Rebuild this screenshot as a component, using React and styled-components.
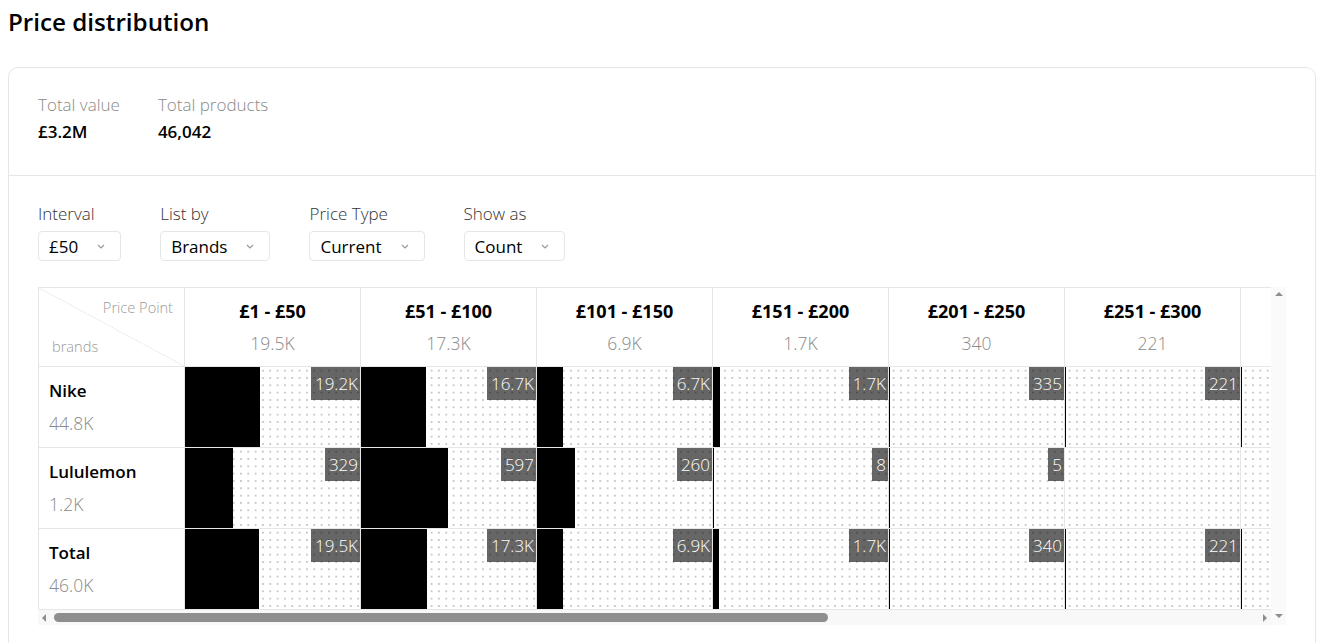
import React from 'react';
import styled, { createGlobalStyle } from 'styled-components';

const Global = createGlobalStyle`
  html, body { margin: 0; padding: 0; background: #fff; }
  body { font-family: "Open Sans", "Noto Sans", sans-serif; color: #000; }
  * { box-sizing: border-box; }
`;

const Page = styled.div`
  padding: 8px 3px 0 8px;
`;

const Title = styled.h1`
  margin: 0;
  font-size: 24.2px;
  line-height: 28px;
  font-weight: 600;
`;

const Card = styled.section`
  margin-top: 31px;
  border: 1px solid #e6e6e6;
  border-radius: 10px;
  padding-bottom: 30px;
`;

const Stats = styled.div`
  display: flex;
  gap: 38px;
  padding: 26px 29px 32px;
  border-bottom: 1px solid #e6e6e6;
`;

const Stat = styled.div`
  display: flex;
  flex-direction: column;
  gap: 5px;
`;

const StatLabel = styled.div`
  font-size: 17px;
  line-height: 22px;
  font-weight: 300;
  color: #8a8a8a;
`;

const StatValue = styled.div`
  font-size: 17px;
  line-height: 22px;
  font-weight: 600;
`;

const Body = styled.div`
  padding: 27px 29px 0;
`;

const Filters = styled.div`
  display: flex;
  gap: 39px;
  margin-bottom: 26px;
`;

const Filter = styled.div`
  display: flex;
  flex-direction: column;
  align-items: flex-start;
  gap: 6px;
`;

const FilterLabel = styled.div`
  font-size: 17px;
  line-height: 22px;
  font-weight: 300;
  color: #333;
`;

const Select = styled.div`
  height: 30px;
  display: flex;
  align-items: center;
  gap: 19px;
  padding: 0 15px 0 10px;
  border: 1px solid #e6e6e6;
  border-radius: 4px;
  font-size: 17px;
  font-weight: 500;
`;

const Chevron = () => (
  <svg width="8" height="5" viewBox="0 0 8 5" fill="none">
    <path d="M1 1 L4 4 L7 1" stroke="#999" strokeWidth="1.2" />
  </svg>
);

const Frame = styled.div`
  display: grid;
  grid-template-columns: 1fr 15px;
  grid-template-rows: auto 15px;
`;

const Viewport = styled.div`
  overflow: hidden;
  border-top: 1px solid #e6e6e6;
  border-left: 1px solid #e6e6e6;
`;

const Grid = styled.div`
  display: grid;
  grid-template-columns: 146px repeat(${p => p.$cols}, 176px);
  width: max-content;
`;

const Cell = styled.div`
  border-right: 1px solid #e6e6e6;
  border-bottom: 1px solid #e6e6e6;
  height: ${p => p.$h}px;
  position: relative;
`;

const Corner = styled(Cell)`
  background: linear-gradient(to top right, transparent calc(50% - 0.5px), #e2e2e2 50%, transparent calc(50% + 0.5px));
  font-size: 14.6px;
  font-weight: 300;
  color: #999;
  display: flex;
  flex-direction: column;
  justify-content: space-between;
  padding: 9px 11px 10px 13px;
`;

const CornerTop = styled.div`
  align-self: flex-end;
`;

const ColHead = styled(Cell)`
  display: flex;
  flex-direction: column;
  align-items: center;
  justify-content: center;
  gap: 10px;
`;

const ColRange = styled.div`
  font-size: 18px;
  line-height: 22px;
  font-weight: 700;
`;

const Muted = styled.div`
  font-size: 17.5px;
  line-height: 22px;
  font-weight: 300;
  color: #8a8a8a;
`;

const RowHead = styled(Cell)`
  display: flex;
  flex-direction: column;
  justify-content: center;
  gap: 10px;
  padding-left: 10px;
`;

const RowName = styled.div`
  font-size: 17px;
  line-height: 22px;
  font-weight: 600;
`;

const DataCell = styled(Cell)`
  background-color: #fff;
  background-image: radial-gradient(circle, #c8c8c8 1.1px, transparent 1.4px);
  background-size: 7.33px 7.33px;
  background-position: 1px 0px;
  display: flex;
  align-items: stretch;
`;

const Bar = styled.div`
  background: #000;
  height: 100%;
`;

const Tag = styled.div`
  position: absolute;
  top: 0;
  right: 0;
  height: 33px;
  padding: 0 2px 0 4px;
  display: flex;
  align-items: center;
  background: rgba(0, 0, 0, 0.6);
  color: #fff;
  font-size: 17px;
  font-weight: 300;
`;

const VTrack = styled.div`
  grid-column: 2;
  grid-row: 1 / 3;
  background: #fafafa;
  display: flex;
  flex-direction: column;
  justify-content: space-between;
  align-items: center;
  padding: 5px 0 7px;
`;

const HTrack = styled.div`
  background: #f8f8f8;
  display: flex;
  align-items: center;
  padding: 0 0 0 4px;
`;

const Thumb = styled.div`
  height: 9px;
  width: 774px;
  margin-left: 8px;
  border-radius: 5px;
  background: #8e8e8e;
`;

const Spacer = styled.div`
  flex: 1;
`;

const Arrow = styled.div`
  width: 0;
  height: 0;
  border: 4px solid transparent;
  ${p => p.$dir === 'up' && `border-bottom: 4px solid #8e8e8e; border-top-width: 0;`}
  ${p => p.$dir === 'down' && `border-top: 4px solid #8e8e8e; border-bottom-width: 0;`}
  ${p => p.$dir === 'left' && `border-right: 4px solid #8e8e8e; border-left-width: 0;`}
  ${p => p.$dir === 'right' && `border-left: 4px solid #8e8e8e; border-right-width: 0; margin-right: 4px;`}
`;

const columns = [
  { range: '£1 - £50', total: '19.5K' },
  { range: '£51 - £100', total: '17.3K' },
  { range: '£101 - £150', total: '6.9K' },
  { range: '£151 - £200', total: '1.7K' },
  { range: '£201 - £250', total: '340' },
  { range: '£251 - £300', total: '221' },
  { range: '£301 - £350', total: '142' },
];

const fmt = v => (v >= 1000 ? `${(v / 1000).toFixed(1)}K` : `${v}`);

const rows = [
  { name: 'Nike', total: 44800, values: [19200, 16700, 6700, 1700, 335, 221, 140] },
  { name: 'Lululemon', total: 1200, values: [329, 597, 260, 8, 5, 0, 0] },
  { name: 'Total', total: 46000, values: [19500, 17300, 6900, 1700, 340, 221, 142] },
];

const filters = [
  { label: 'Interval', value: '£50' },
  { label: 'List by', value: 'Brands' },
  { label: 'Price Type', value: 'Current' },
  { label: 'Show as', value: 'Count' },
];

export default function App() {
  return (
    <Page>
      <Global />
      <Title>Price distribution</Title>
      <Card>
        <Stats>
          <Stat>
            <StatLabel>Total value</StatLabel>
            <StatValue>£3.2M</StatValue>
          </Stat>
          <Stat>
            <StatLabel>Total products</StatLabel>
            <StatValue>46,042</StatValue>
          </Stat>
        </Stats>
        <Body>
          <Filters>
            {filters.map(f => (
              <Filter key={f.label}>
                <FilterLabel>{f.label}</FilterLabel>
                <Select>
                  {f.value}
                  <Chevron />
                </Select>
              </Filter>
            ))}
          </Filters>
          <Frame>
            <Viewport>
              <Grid $cols={columns.length}>
                <Corner $h={79}>
                  <CornerTop>Price Point</CornerTop>
                  <div>brands</div>
                </Corner>
                {columns.map(c => (
                  <ColHead key={c.range} $h={79}>
                    <ColRange>{c.range}</ColRange>
                    <Muted>{c.total}</Muted>
                  </ColHead>
                ))}
                {rows.map(r => (
                  <React.Fragment key={r.name}>
                    <RowHead $h={81}>
                      <RowName>{r.name}</RowName>
                      <Muted>{fmt(r.total)}</Muted>
                    </RowHead>
                    {r.values.map((v, i) => (
                      <DataCell key={i} $h={81}>
                        {v > 0 && <Bar style={{ width: Math.max(1, (v / r.total) * 175) }} />}
                        {v > 0 && <Tag>{fmt(v)}</Tag>}
                      </DataCell>
                    ))}
                  </React.Fragment>
                ))}
              </Grid>
            </Viewport>
            <VTrack>
              <Arrow $dir="up" />
              <Arrow $dir="down" />
            </VTrack>
            <HTrack>
              <Arrow $dir="left" />
              <Thumb />
              <Spacer />
              <Arrow $dir="right" />
            </HTrack>
          </Frame>
        </Body>
      </Card>
    </Page>
  );
}
